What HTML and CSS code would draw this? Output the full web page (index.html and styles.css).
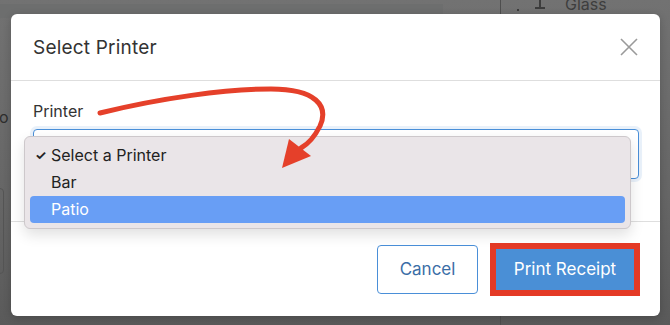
FILE: index.html
```html
<!DOCTYPE html>
<html lang="en">
<head>
<meta charset="utf-8">
<title>Select Printer</title>
<link rel="stylesheet" href="styles.css">
</head>
<body>
<div class="app">
  <div class="app-main">
    <div class="topbar"></div>
    <div class="side-text">o</div>
    <div class="side-card"></div>
  </div>
  <div class="app-side">
    <div class="side-item">
      <span class="dot"></span>
      <svg class="glass" width="14" height="14" viewBox="0 0 14 14"><path d="M7 0 V10 M2 11 H12" stroke="#3c3c3c" stroke-width="2" fill="none"/></svg>
      <span>Glass</span>
    </div>
  </div>
</div>

<div class="overlay">
  <div class="modal">
    <div class="modal-header">
      <h2 class="modal-title">Select Printer</h2>
      <svg class="close" width="18" height="18" viewBox="0 0 18 18"><path d="M1 1 L17 17 M17 1 L1 17" stroke="#9a9a9a" stroke-width="1.6" fill="none"/></svg>
    </div>
    <div class="modal-body">
      <label class="field-label">Printer</label>
      <div class="select-box"></div>
    </div>
    <div class="modal-footer">
      <button class="btn btn-outline">Cancel</button>
      <button class="btn btn-primary highlight">Print Receipt</button>
    </div>

    <div class="menu">
      <div class="menu-item"><span class="check">✓</span>Select a Printer</div>
      <div class="menu-item">Bar</div>
      <div class="menu-item active">Patio</div>
    </div>

    <svg class="arrow" width="649" height="302" viewBox="0 0 649 302">
      <path d="M89,99 C150,84 215,75 260,75 C305,75 318,92 309,112 C303,124 297,130 290,134" stroke="#e5402a" stroke-width="5" fill="none" stroke-linecap="round"/>
      <polygon points="271,154 278,125 300,142" fill="#e5402a"/>
    </svg>
  </div>
</div>
</body>
</html>
```

FILE: styles.css
```css
* { box-sizing: border-box; }
html, body { margin: 0; padding: 0; }
body {
  width: 670px;
  height: 325px;
  overflow: hidden;
  font-family: Inter, "Noto Sans", "Liberation Sans", sans-serif;
  background: linear-gradient(#727272, #666666 60%, #5a5a5a);
  position: relative;
}
.app {
  display: flex;
  height: 325px;
}
.app-main {
  width: 501px;
  border-right: 1px solid #4e4e4e;
  display: flex;
  flex-direction: column;
}
.topbar {
  height: 14px;
  margin-top: 4px;
  width: 443px;
  background: #6d6e6e;
}
.side-text {
  margin-top: 88px;
  color: #2e2e2e;
  font-size: 16px;
  line-height: 22px;
  margin-left: -1px;
}
.side-card {
  margin-top: 60px;
  margin-left: -10px;
  width: 14px;
  height: 86px;
  border: 1px solid #555;
  border-radius: 4px;
}
.app-side {
  flex: 1;
}
.side-item {
  display: flex;
  align-items: center;
  gap: 18px;
  margin-top: -6px;
  padding-left: 16px;
  color: #3e3e3e;
  font-size: 16px;
  line-height: 20px;
}
.dot {
  width: 2px;
  height: 2px;
  background: #3c3c3c;
  margin-top: 12px;
}
.glass { margin-top: 0; margin-left: -4px; }

.overlay {
  position: absolute;
  inset: 0;
}
.modal {
  position: absolute;
  left: 11px;
  top: 14px;
  width: 649px;
  height: 302px;
  background: #fff;
  border-radius: 6px;
  display: flex;
  flex-direction: column;
  box-shadow: 0 2px 8px rgba(0,0,0,0.2);
}
.modal-header {
  height: 67px;
  border-bottom: 1px solid #dedede;
  display: flex;
  align-items: center;
  justify-content: space-between;
  padding: 0 22px 0 22px;
}
.modal-title {
  margin: 0;
  font-size: 19px;
  font-weight: 400;
  color: #333;
  letter-spacing: 0.2px;
}
.modal-body {
  padding: 20px 21px 0 22px;
  height: 141px;
  border-bottom: 1px solid #dedede;
}
.field-label {
  display: block;
  font-size: 16px;
  color: #333;
  line-height: 20px;
}
.select-box {
  margin-top: 8px;
  height: 50px;
  border: 1px solid #4a8fd8;
  border-radius: 4px;
  box-shadow: 0 0 0 3px rgba(74,143,216,0.12);
  background: #fff;
}
.modal-footer {
  flex: 1;
  display: flex;
  align-items: center;
  justify-content: flex-end;
  gap: 18px;
  padding-right: 26px;
}
.btn {
  font-family: inherit;
  font-size: 17px;
  border-radius: 4px;
  cursor: pointer;
}
.btn-outline {
  width: 101px;
  height: 49px;
  background: #fff;
  border: 1px solid #4a8fd8;
  color: #3b6ea6;
}
.btn-primary {
  width: 138px;
  height: 41px;
  background: #4a8fd6;
  border: none;
  color: #fff;
  border-radius: 0;
}
.highlight {
  outline: 6px solid #e43a26;
}

.menu {
  position: absolute;
  left: 13px;
  top: 122px;
  width: 607px;
  height: 93px;
  background: #eae5e8;
  border: 1px solid #cdc8cb;
  border-radius: 6px;
  padding: 5px 5px;
  box-shadow: 0 6px 14px rgba(0,0,0,0.12);
}
.menu-item {
  height: 27px;
  line-height: 27px;
  font-size: 16px;
  color: #222;
  padding-left: 21px;
  position: relative;
  border-radius: 4px;
}
.menu-item .check {
  position: absolute;
  left: 5px;
  font-size: 13px;
  font-weight: 700;
}
.menu-item.active {
  background: #689ef5;
  color: #fff;
}
.arrow {
  position: absolute;
  left: 0;
  top: 0;
  pointer-events: none;
}
```
